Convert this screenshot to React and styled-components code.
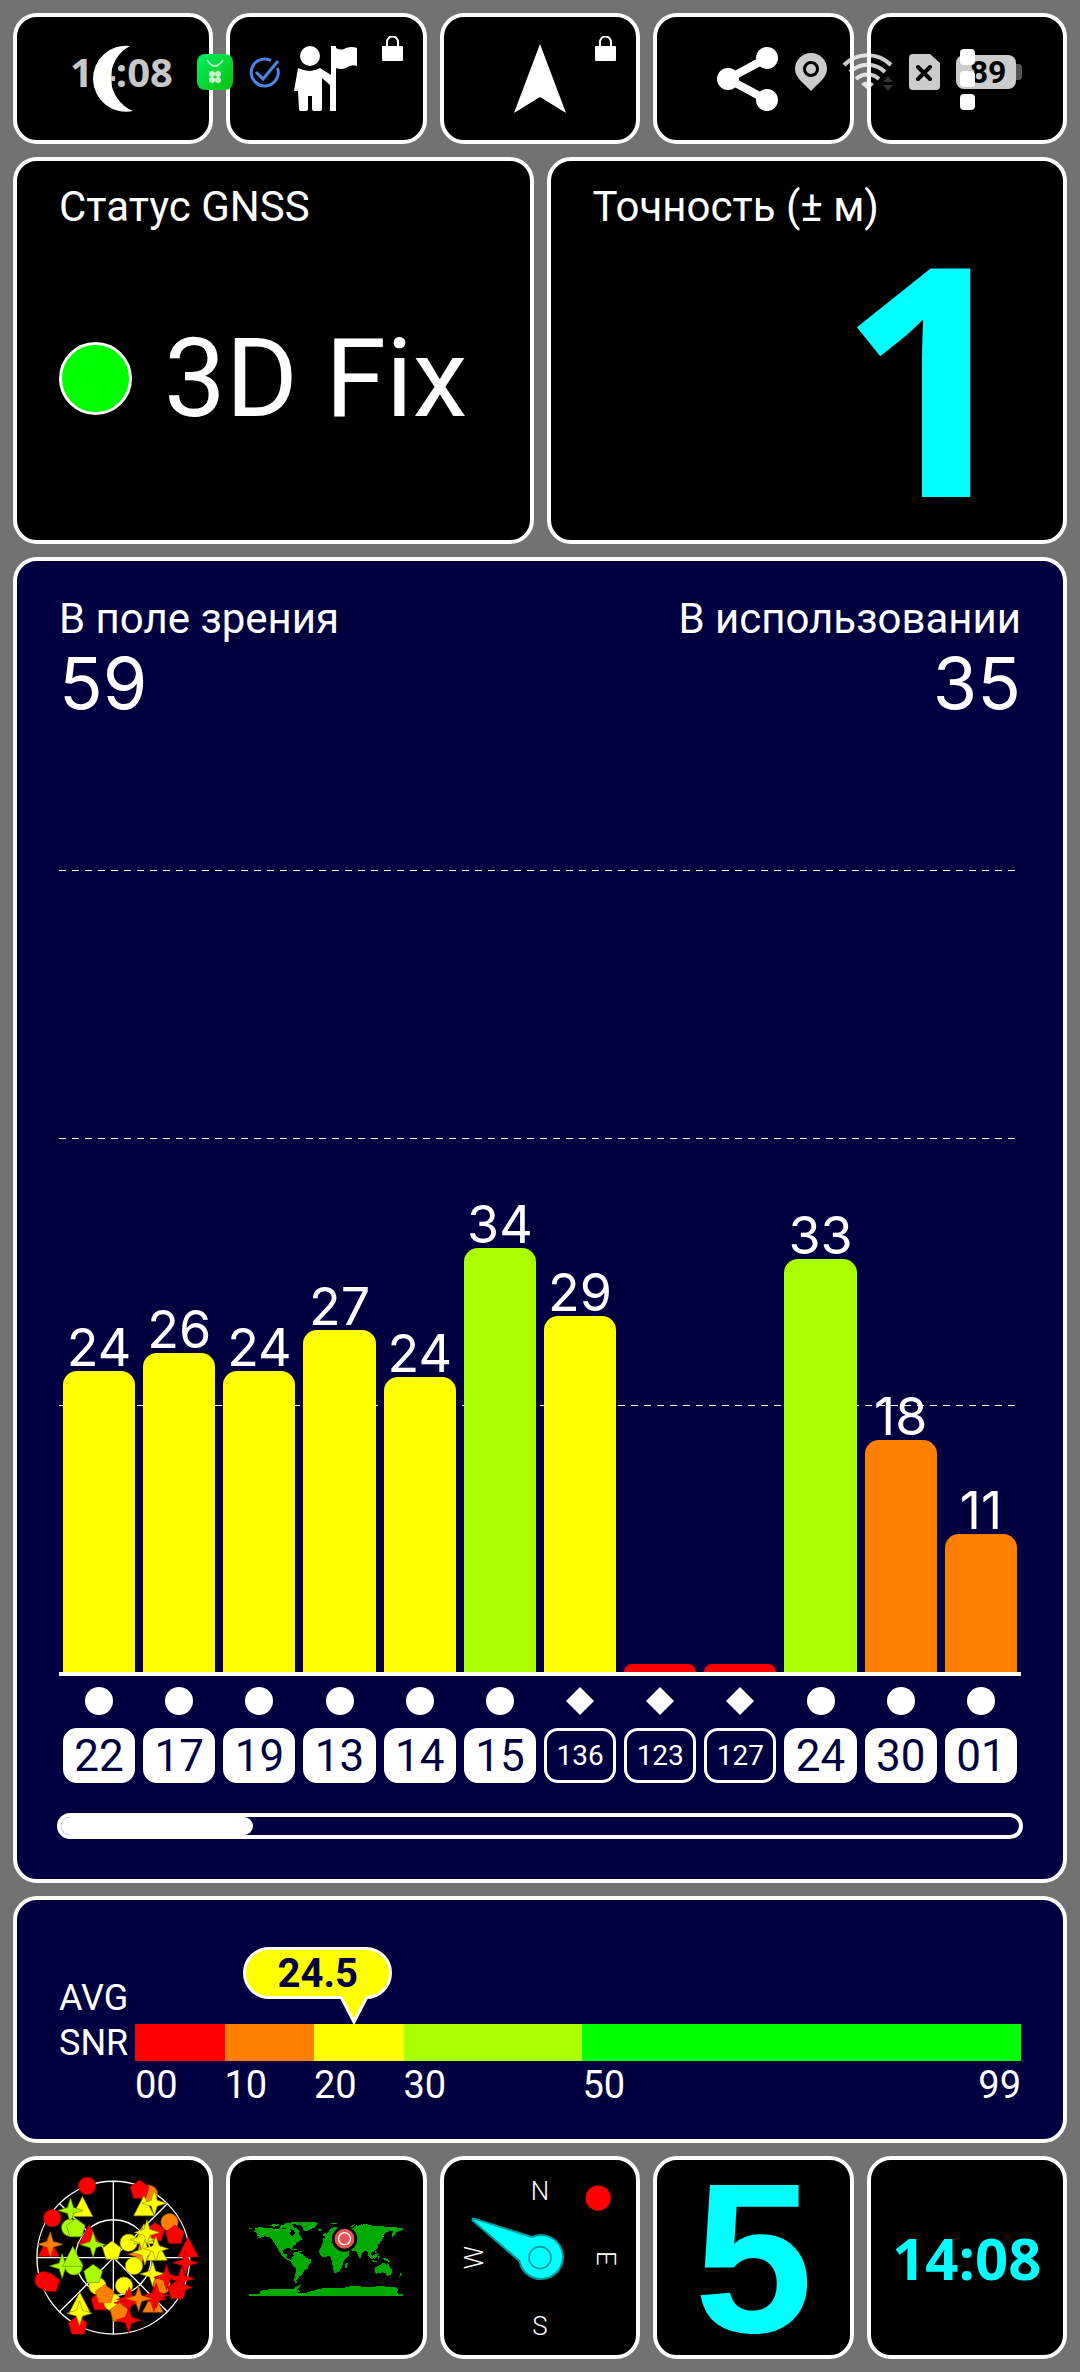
import React from 'react';
import styled, { createGlobalStyle } from 'styled-components';

const satellites = [
  { id: '22', snr: 24.3, label: 24 },
  { id: '17', snr: 25.7, label: 26 },
  { id: '19', snr: 24.3, label: 24 },
  { id: '13', snr: 27.6, label: 27 },
  { id: '14', snr: 23.8, label: 24 },
  { id: '15', snr: 34.2, label: 34 },
  { id: '136', snr: 28.7, label: 29, sbas: true },
  { id: '123', snr: 0, sbas: true },
  { id: '127', snr: 0, sbas: true },
  { id: '24', snr: 33.3, label: 33 },
  { id: '30', snr: 18.7, label: 18 },
  { id: '01', snr: 11.1, label: 11 },
];

const CHART_MAX = 76.7;

const snrColor = (snr) => {
  if (snr < 10) return '#ff0000';
  if (snr < 20) return '#ff8000';
  if (snr < 30) return '#ffff00';
  if (snr < 50) return '#aaff00';
  return '#00ff00';
};

const ranges = [
  { from: 0, size: 10, label: '00' },
  { from: 10, size: 10, label: '10' },
  { from: 20, size: 10, label: '20' },
  { from: 30, size: 20, label: '30' },
  { from: 50, size: 49, label: '50' },
];

const R = '#ff0000';
const O = '#ff8000';
const Y = '#ffff00';
const G = '#aaff00';

// [shape, color, x, y]
const skyItems = [
  ['circle', R, 171, 46], ['circle', O, 357, 70], ['pentagon', R, 329, 58],
  ['triangle', Y, 157, 112], ['star', G, 121, 120], ['circle', R, 66, 143],
  ['circle', G, 120, 172], ['pentagon', G, 137, 174], ['triangle', Y, 342, 110],
  ['star', Y, 373, 98], ['circle', O, 419, 155], ['pentagon', R, 376, 186],
  ['pentagon', R, 435, 194], ['triangle', R, 55, 232], ['star', O, 60, 222],
  ['triangle', R, 177, 196], ['star', G, 189, 223], ['circle', Y, 296, 217],
  ['pentagon', Y, 246, 242], ['triangle', R, 475, 234], ['star', R, 467, 277],
  ['star', O, 332, 252], ['triangle', Y, 342, 194], ['star', Y, 338, 208],
  ['star', Y, 351, 186], ['star', Y, 345, 246], ['triangle', Y, 381, 244],
  ['star', Y, 378, 235], ['circle', Y, 312, 287], ['star', Y, 368, 311],
  ['star', G, 96, 287], ['circle', G, 131, 288], ['triangle', G, 128, 262],
  ['circle', Y, 202, 347], ['pentagon', G, 189, 312], ['circle', Y, 282, 346],
  ['circle', R, 40, 330], ['pentagon', R, 60, 338], ['circle', O, 396, 345],
  ['star', R, 410, 321], ['pentagon', R, 442, 360], ['star', R, 456, 325],
  ['star', R, 451, 352], ['triangle', O, 369, 400], ['star', R, 372, 386],
  ['star', R, 379, 376], ['pentagon', R, 211, 394], ['circle', Y, 247, 396],
  ['pentagon', O, 224, 373], ['star', R, 290, 398], ['star', R, 298, 388],
  ['star', O, 326, 385], ['pentagon', O, 268, 428], ['star', R, 296, 450],
  ['pentagon', R, 143, 467], ['triangle', Y, 149, 400], ['star', Y, 148, 429],
];

const shapePoints = {
  pentagon: '0,-30 28,-9 18,25 -18,25 -28,-9',
  triangle: '0,-34 31,26 -31,26',
  star: '0,-38 9,-9 38,0 9,9 0,38 -9,9 -38,0 -9,-9',
};

const strokes = { [R]: '#b30000', [O]: '#a85400', [Y]: '#8f8f00', [G]: '#5f8f00' };

const SkyItem = ({ item }) => {
  const [shape, color, x, y] = item;
  if (shape === 'circle') {
    return <circle cx={x} cy={y} r="26" fill={color} stroke={strokes[color]} strokeWidth="2" />;
  }
  return (
    <polygon
      points={shapePoints[shape]}
      transform={`translate(${x} ${y})`}
      fill={color}
      stroke={strokes[color]}
      strokeWidth="2"
    />
  );
};

const Radar = () => (
  <TileSvg viewBox="-40 -31 579 585" aria-hidden="true">
    <g fill="none" stroke="#fff" strokeWidth="4">
      <circle cx="250" cy="262" r="230" />
      <circle cx="250" cy="262" r="114" />
      <path d="M250 32v460M20 262h460M88 99l325 326M413 99L88 425" />
    </g>
    {skyItems.map((item, i) => <SkyItem key={i} item={item} />)}
  </TileSvg>
);

const WorldMap = () => (
  <TileSvg viewBox="-44 -166 578 585" aria-hidden="true">
    <g fill="#00aa00" shapeRendering="crispEdges">
      <path d="M33 38l10-2 32 1 14 3 22-1 10 3 12-2 6 6-4 8 6 8 8-4 4-9 8 4 6 8 6 10-6 5-8 4-6 8-8 6-3 8-3 2-3-6-12 1-8 4 0 8 4 5 7-1 2 4-4 8 8 4 10 6-4 2-12-6-12-8-6-10-8-12-4-8-8-12-6-10-8-8-14-2-14 4-10 4 6-8-8-3 2-8-8-2z" />
      <path d="M108 30l14-4 8 4 14 0 6 8 10 2 6 10-6 5-10-4-4-8-16-2-12-3-12-1z" />
      <path d="M122 24l18-3 26-1-8 5-20 3-10 2z" />
      <path d="M152 24l24-4 36 1 10 3-6 4-4 8-12 4-16 8-6-2-4-10-6-6-14-2z" />
      <path d="M145 113l8-3 14 2 12 8 6 8 14 4 2 6-8 12-4 10-10 6-6 12-8 4-4 9-6 4 2 8-6 2-2-12 4-20 0-14-8-8-6-10 2-10 6-10z" />
      <path d="M228 98l6-14 10-4 14-1 4 5 14 1 10 0 6 12 8 10 4 6 10 0-2 8-14 14-2 10-4 10-6 10-6 6-10 2-4-10-2-14-4-18-4-9-12 2-10 1-8-8-3-8z" />
      <path d="M304 146l5-4 1 6-4 10-4 1-2-8z" />
      <path d="M234 76l0-8 10-2-4-6 8-6 8-6 4 6 10 0 20 10 10 20-8 8-12-2-8-4-4 2-6-10-4 2 4 8-6-2-8-8-6 3-4 5z" />
      <path d="M236 58l5-8 5 6-2 6-8 0z" />
      <path d="M252 49l4-8 12-6 14 2 16 2 8-3 20 3 8-9 16 2 8-6 20 2 8 4 22-1 14 3 26 1 18 3 14 2-10 6-12 3-6 8-8 8 0-12 4-6-12 1-12 3-8 8 2 6-6 10-6 4 0 6-6 3 0 8-8 8-4 6-8 3 2 8 4 4-6 6-8-10-2-10-4-5-6 1-8 8-2 10-4 6-6-12-4-10-10-3-12-2 2 6-8 8-10 6-8-12-4-8 0-10-10-30-4-8-8 4-2 8-6 1z" />
      <path d="M369 112l8 6 8 12-3 3-8-8zM380 134l12 2 6 3-12 1zM386 121l6-5 6 2-3 10-6 2-4-4zM400 122l6-1-2 8-4 3zM390 105l5 1 2 8-4-2zM396 112l6 3-3 5zM414 128l10 1 10 6 6 6-12-3-8-4z" />
      <path d="M391 158l8-6 8-3 6-6 8 1 4 6 4-8 4 6 4 8 6 8-2 10-4 6-8 2-6-8-8-3-10 2-10 2-4-4 0-8zM436 185l4 0-2 5zM468 174l5 1-4 7-6 5-2-2 6-5z" />
      <path d="M404 70l4 2-2 8-6 4-2-2 5-4zM409 56l2 9-2 3-2-6z" />
      <path d="M142 100l10 0 8 4-6 1-10-2zM160 106l8 0 4 3-10 0z" />
      <path d="M219 42l12 0 2 3-10 1zM258 24l20 0-4 3-12-1zM318 34l8-6 6-1-8 8zM340 29l12-2 4 3-12 1z" />
      <path d="M74 32l12-6 10 2 8-2 2 4-16 4zM12 38l9 0 0 3-9 0z" />
      <path d="M12 237H46V228L56 224 88 221 120 222 146 221 156 214 170 208 164 216 156 222 166 228 160 233 178 234 206 226 226 220 262 218 300 217 316 213 344 213 366 216 404 213 434 214 456 217 462 224 456 230 460 235 476 236V243H12z" />
    </g>
    <circle cx="300" cy="71" r="38" fill="#000" />
    <circle cx="300" cy="70" r="30" fill="#e25555" />
    <circle cx="300" cy="70" r="18" fill="none" stroke="#fff" strokeWidth="4" />
  </TileSvg>
);

const Compass = () => (
  <TileSvg viewBox="41 59 579 585" aria-hidden="true">
    <CompassLetter x="330" y="178">N</CompassLetter>
    <CompassLetter x="330" y="585">S</CompassLetter>
    <CompassLetter transform="translate(502 354) rotate(90)">E</CompassLetter>
    <CompassLetter transform="translate(158 352) rotate(-90)">W</CompassLetter>
    <circle cx="505" cy="173" r="38" fill="#ff0000" />
    <path
      d="M127 237q-2-4 6-2L306 290A66 66 0 1 1 268 362L127 240z"
      fill="#00ffff"
      stroke="#009999"
      strokeWidth="6"
      strokeLinejoin="round"
    />
    <circle cx="330" cy="352" r="33" fill="none" stroke="#009999" strokeWidth="5" />
  </TileSvg>
);

const Lock = () => (
  <LockIcon viewBox="0 0 21 25" aria-hidden="true">
    <path d="M5 11V6a5 5 0 0 1 11 0v5" fill="none" stroke="#fff" strokeWidth="2" />
    <rect x="0" y="10" width="21" height="15" rx="1" fill="#fff" />
  </LockIcon>
);

const App = () => {
  const average = 24.5;

  return (
    <>
      <GlobalStyle />
      <Page>
        <StatusBar>
          <StatusGroup>
            <Clock>14:08</Clock>
            <svg width="36" height="36" viewBox="0 0 36 36" aria-hidden="true">
              <defs>
                <linearGradient id="bag" x1="0" y1="0" x2="1" y2="1">
                  <stop offset="0" stopColor="#00f060" />
                  <stop offset="1" stopColor="#0bc00f" />
                </linearGradient>
              </defs>
              <rect width="36" height="36" rx="8" fill="url(#bag)" />
              <path d="M10 6q8 12 16 0" fill="none" stroke="#c8ffd8" strokeWidth="1.5" />
              <g fill="#c8f5cc">
                <circle cx="15" cy="20" r="3" /><circle cx="21" cy="20" r="3" />
                <circle cx="15" cy="26" r="3" /><circle cx="21" cy="26" r="3" />
              </g>
            </svg>
            <CheckIcon width="31" height="31" viewBox="0 0 31 31" aria-hidden="true">
              <path d="M22 3.5A13.500 13.500 0 1 0 28.500 11" />
              <path d="M7 15l7 7L29 4" />
            </CheckIcon>
          </StatusGroup>
          <StatusGroup>
            <svg width="32" height="38" viewBox="0 0 32 38" aria-hidden="true">
              <path
                fillRule="evenodd"
                d="M16 0a16 16 0 0 1 16 16c0 9-9 14-16 22C9 30 0 25 0 16A16 16 0 0 1 16 0zm0 8a8 8 0 1 0 0 16a8 8 0 0 0 0-16z"
                fill="#fff"
                fillOpacity=".8"
              />
              <circle cx="16" cy="16" r="5" fill="#fff" fillOpacity=".8" />
            </svg>
            <svg width="50" height="38" viewBox="0 0 50 38" aria-hidden="true">
              <g fill="none" stroke="#fff" strokeOpacity=".8" strokeWidth="4">
                <path d="M1 12a33 33 0 0 1 47 0" />
                <path d="M7 19a25 25 0 0 1 35 0" />
                <path d="M13 26a17 17 0 0 1 23 0" />
              </g>
              <path d="M18 31a10 10 0 0 1 13 0l-6 6z" fill="#fff" fillOpacity=".8" />
              <path d="M40 29l5-6 5 6zM40 32l5 6 5-6z" fill="#333" />
            </svg>
            <svg width="31" height="36" viewBox="0 0 31 36" aria-hidden="true">
              <path d="M4 0h17l10 9v23a4 4 0 0 1-4 4H4a4 4 0 0 1-4-4V4a4 4 0 0 1 4-4z" fill="#ccc" />
              <path d="M9 13l12 12M21 13L9 25" stroke="#000" strokeWidth="4" strokeLinecap="round" />
            </svg>
            <Battery>
              <BatteryLevel>89</BatteryLevel>
              <BatteryTip />
            </Battery>
          </StatusGroup>
        </StatusBar>

        <Toolbar>
          <ToolButton aria-label="Ночной режим">
            <ToolIcon viewBox="0 0 66 66">
              <path d="M50 0A33 33 0 1 0 53 65A36 36 0 0 1 50 0z" />
            </ToolIcon>
          </ToolButton>
          <ToolButton aria-label="Путевые точки">
            <ToolIcon viewBox="0 0 66 66">
              <circle cx="16" cy="10" r="10" />
              <path d="M4 22q12 6 22 0l11 7V0h5v2q5 3 10 0 6-2 11 0v18q-6-2-11 2-5 2-10 0v43h-6V39L28 32v12V63q0 2-2 2h-6q-2 0-2-2V50h-4v13q0 2-2 2H6q-1 0-1-2L4 45H0z" />
            </ToolIcon>
            <Lock />
          </ToolButton>
          <ToolButton aria-label="Навигация">
            <ToolIcon viewBox="0 0 66 66">
              <path d="M33-2L59 67 33 51 7 67z" />
            </ToolIcon>
            <Lock />
          </ToolButton>
          <ToolButton aria-label="Поделиться">
            <ToolIcon viewBox="3 0 66 66">
              <path d="M50 12L11 33l39 21" fill="none" stroke="#fff" strokeWidth="8" />
              <circle cx="11" cy="33" r="11" />
              <circle cx="50" cy="12" r="11" />
              <circle cx="50" cy="54" r="11" />
            </ToolIcon>
          </ToolButton>
          <ToolButton aria-label="Меню">
            <ToolIcon viewBox="0 0 66 66">
              <rect x="26" y="3" width="15" height="16" rx="4" />
              <rect x="26" y="25" width="15" height="16" rx="4" />
              <rect x="26" y="48" width="15" height="16" rx="4" />
            </ToolIcon>
          </ToolButton>
        </Toolbar>

        <Summary>
          <Card>
            <Label>Статус GNSS</Label>
            <Fix>
              <FixDot />
              3D Fix
            </Fix>
          </Card>
          <Card>
            <Label>Точность (± м)</Label>
            <Accuracy>1</Accuracy>
          </Card>
        </Summary>

        <ChartPanel>
          <Counters>
            <Counter>
              <Label>В поле зрения</Label>
              <Count>59</Count>
            </Counter>
            <Counter $right>
              <Label>В использовании</Label>
              <Count>35</Count>
            </Counter>
          </Counters>
          <Chart>
            <GridLines>
              <GridRow />
              <GridRow />
              <GridRow />
            </GridLines>
            {satellites.map((sat) => (
              <Column key={sat.id}>
                {sat.label && <BarValue>{sat.label}</BarValue>}
                <Bar
                  $color={snrColor(sat.snr)}
                  style={{ height: `${(sat.snr / CHART_MAX) * 100}%` }}
                />
              </Column>
            ))}
          </Chart>
          <SatelliteRow>
            {satellites.map((sat) => (
              <Satellite key={sat.id}>
                <svg width="28" height="28" viewBox="0 0 28 28" fill="#fff" aria-hidden="true">
                  {sat.sbas ? <path d="M14 0l14 14-14 14L0 14z" /> : <circle cx="14" cy="14" r="14" />}
                </svg>
                <Badge $outlined={sat.sbas}>{sat.id}</Badge>
              </Satellite>
            ))}
          </SatelliteRow>
          <ScrollTrack>
            <ScrollThumb />
          </ScrollTrack>
        </ChartPanel>

        <SnrPanel>
          <SnrTitle>
            <span>AVG</span>
            <span>SNR</span>
          </SnrTitle>
          <SnrScale>
            <Balloon style={{ left: `${(average / 99) * 100}%` }}>
              <BalloonText>{average}</BalloonText>
              <BalloonTail viewBox="0 0 28 30" aria-hidden="true">
                <path d="M0 0L14 28 28 0z" fill="#ffff00" />
                <path d="M1 3L14 28 27 3" fill="none" stroke="#fff" strokeWidth="3" />
              </BalloonTail>
            </Balloon>
            <Segments>
              {ranges.map((range) => (
                <Segment key={range.label} $size={range.size} $color={snrColor(range.from)} />
              ))}
            </Segments>
            <Segments>
              {ranges.map((range) => (
                <Tick key={range.label} $size={range.size}>
                  <span>{range.label}</span>
                  {range.from === 50 && <span>99</span>}
                </Tick>
              ))}
            </Segments>
          </SnrScale>
        </SnrPanel>

        <Tabs>
          <Tab aria-label="Небо"><Radar /></Tab>
          <Tab aria-label="Карта"><WorldMap /></Tab>
          <Tab aria-label="Компас"><Compass /></Tab>
          <Tab><Speed>5</Speed></Tab>
          <Tab><Time>14:08</Time></Tab>
        </Tabs>
      </Page>
    </>
  );
};

export default App;

const GlobalStyle = createGlobalStyle`
  * {
    box-sizing: border-box;
  }

  body {
    margin: 0;
    background: #727272;
    color: #fff;
    font-family: Roboto, "Liberation Sans", sans-serif;
  }

  button {
    font-family: inherit;
    color: inherit;
    padding: 0;
    cursor: pointer;
  }
`

const Page = styled.main`
  position: relative;
  display: flex;
  flex-direction: column;
  gap: 13px;
  min-height: 100vh;
  padding: 13px;
`

const StatusBar = styled.div`
  position: absolute;
  z-index: 1;
  top: 50px;
  left: 0;
  right: 0;
  display: flex;
  justify-content: space-between;
  align-items: center;
  height: 44px;
  padding: 0 58px 0 70px;
  pointer-events: none;
`

const StatusGroup = styled.div`
  display: flex;
  align-items: center;
  gap: 16px;
`

const Clock = styled.span`
  margin-right: 8px;
  font-family: "Open Sans", sans-serif;
  font-size: 40px;
  line-height: 44px;
  font-weight: 700;
  color: rgba(255, 255, 255, 0.8);
`

const CheckIcon = styled.svg`
  fill: none;
  stroke: #4a86e8;
  stroke-width: 3;
`

const Battery = styled.div`
  display: flex;
  align-items: center;
`

const BatteryLevel = styled.span`
  width: 60px;
  height: 34px;
  padding-left: 4px;
  border-radius: 8px;
  background: rgba(255, 255, 255, 0.8);
  color: #000;
  font-size: 32px;
  line-height: 34px;
  font-weight: 700;
  text-align: center;
`

const BatteryTip = styled.span`
  width: 6px;
  height: 16px;
  border-radius: 0 4px 4px 0;
  background: #555;
`

const Toolbar = styled.nav`
  display: grid;
  grid-template-columns: repeat(5, 1fr);
  gap: 13px;
`

const ToolButton = styled.button`
  position: relative;
  display: flex;
  justify-content: center;
  align-items: center;
  height: 131px;
  border: 4px solid #fff;
  border-radius: 24px;
  background: #000;
`

const ToolIcon = styled.svg`
  position: relative;
  z-index: 2;
  width: 66px;
  height: 66px;
  fill: #fff;
  overflow: visible;
`

const LockIcon = styled.svg`
  position: absolute;
  top: 19px;
  right: 20px;
  width: 21px;
  height: 25px;
`

const Summary = styled.section`
  display: grid;
  grid-template-columns: 1fr 1fr;
  gap: 13px;
`

const Card = styled.div`
  display: flex;
  flex-direction: column;
  height: 387px;
  padding: 20px 42px 17px;
  border: 4px solid #fff;
  border-radius: 24px;
  background: #000;
`

const Label = styled.div`
  font-size: 42px;
  line-height: 52px;
`

const Fix = styled.div`
  flex: 1;
  display: flex;
  align-items: center;
  gap: 32px;
  font-size: 110px;
`

const FixDot = styled.span`
  width: 73px;
  height: 73px;
  border: 3px solid #fff;
  border-radius: 50%;
  background: #00ff00;
`

const Accuracy = styled.div`
  font-family: "Open Sans", sans-serif;
  font-size: 320px;
  line-height: 280px;
  font-weight: 700;
  text-align: right;
  color: #00ffff;
`

const ChartPanel = styled.section`
  flex: 1;
  display: flex;
  flex-direction: column;
  padding: 32px 42px 40px;
  border: 4px solid #fff;
  border-radius: 24px;
  background: #000040;
`

const Counters = styled.div`
  display: flex;
  justify-content: space-between;
`

const Counter = styled.div`
  text-align: ${(props) => (props.$right ? 'right' : 'left')};
`

const Count = styled.div`
  font-family: Inter, sans-serif;
  font-size: 72px;
  line-height: 76px;
`

const Chart = styled.div`
  position: relative;
  flex: 1;
  display: grid;
  grid-template-columns: repeat(12, 1fr);
  min-height: 600px;
  border-bottom: 4px solid #fff;
`

const GridLines = styled.div`
  position: absolute;
  inset: 0;
  display: flex;
  flex-direction: column;
  justify-content: flex-end;
`

const GridRow = styled.div`
  height: 28.1%;
  background: repeating-linear-gradient(90deg, #fff 0 7px, transparent 7px 13px) top / 100% 1px no-repeat;
`

const Column = styled.div`
  position: relative;
  display: flex;
  flex-direction: column;
  justify-content: flex-end;
  padding: 0 4px;
`

const BarValue = styled.span`
  font-family: Inter, sans-serif;
  font-size: 52px;
  line-height: 46px;
  text-align: center;
`

const Bar = styled.div`
  flex: none;
  min-height: 8px;
  border-radius: 14px 14px 0 0;
  background: ${(props) => props.$color};
`

const SatelliteRow = styled.div`
  display: grid;
  grid-template-columns: repeat(12, 1fr);
  margin-top: 11px;
`

const Satellite = styled.div`
  display: flex;
  flex-direction: column;
  align-items: center;
  gap: 13px;
  padding: 0 4px;
`

const Badge = styled.span`
  display: flex;
  justify-content: center;
  align-items: center;
  width: 100%;
  height: 55px;
  border: 3px solid #fff;
  border-radius: 14px;
  background: ${(props) => (props.$outlined ? '#000040' : '#fff')};
  color: ${(props) => (props.$outlined ? '#fff' : '#000040')};
  font-size: ${(props) => (props.$outlined ? '28px' : '44px')};
`

const ScrollTrack = styled.div`
  height: 26px;
  margin: 30px -2px 0;
  border: 4px solid #fff;
  border-radius: 13px;
`

const ScrollThumb = styled.div`
  width: 20%;
  height: 100%;
  border-radius: 9px;
  background: #fff;
`

const SnrPanel = styled.section`
  display: flex;
  height: 247px;
  padding: 0 42px;
  border: 4px solid #fff;
  border-radius: 24px;
  background: #000040;
`

const SnrTitle = styled.div`
  display: flex;
  flex-direction: column;
  width: 76px;
  padding-top: 76px;
  font-size: 36px;
  line-height: 45px;
`

const SnrScale = styled.div`
  position: relative;
  flex: 1;
  padding-top: 124px;
`

const Balloon = styled.div`
  position: absolute;
  top: 47px;
  height: 77px;
`

const BalloonText = styled.div`
  display: flex;
  justify-content: center;
  align-items: center;
  width: 149px;
  height: 52px;
  margin-left: -111px;
  border: 3px solid #fff;
  border-radius: 26px;
  background: #ffff00;
  color: #000040;
  font-size: 40px;
  font-weight: 700;
`

const BalloonTail = styled.svg`
  position: absolute;
  left: -14px;
  bottom: 0;
  width: 28px;
  height: 30px;
`

const Segments = styled.div`
  display: flex;
`

const Segment = styled.div`
  flex: ${(props) => props.$size} 0 0;
  height: 37px;
  background: ${(props) => props.$color};
`

const Tick = styled.div`
  flex: ${(props) => props.$size} 0 0;
  display: flex;
  justify-content: space-between;
  font-size: 38px;
  line-height: 48px;
`

const Tabs = styled.nav`
  display: grid;
  grid-template-columns: repeat(5, 1fr);
  gap: 13px;
`

const Tab = styled.button`
  display: flex;
  justify-content: center;
  align-items: center;
  height: 203px;
  border: 4px solid #fff;
  border-radius: 24px;
  background: #000;
`

const TileSvg = styled.svg`
  width: 100%;
  height: 100%;
`

const CompassLetter = styled.text`
  fill: #fff;
  font-size: 78px;
  font-weight: 300;
  text-anchor: middle;
`

const Speed = styled.span`
  font-family: "Liberation Sans", sans-serif;
  font-size: 214px;
  line-height: 195px;
  font-weight: 700;
  color: #00ffff;
`

const Time = styled.span`
  font-family: "Open Sans", sans-serif;
  font-size: 58px;
  font-weight: 700;
  color: #00ffff;
`
